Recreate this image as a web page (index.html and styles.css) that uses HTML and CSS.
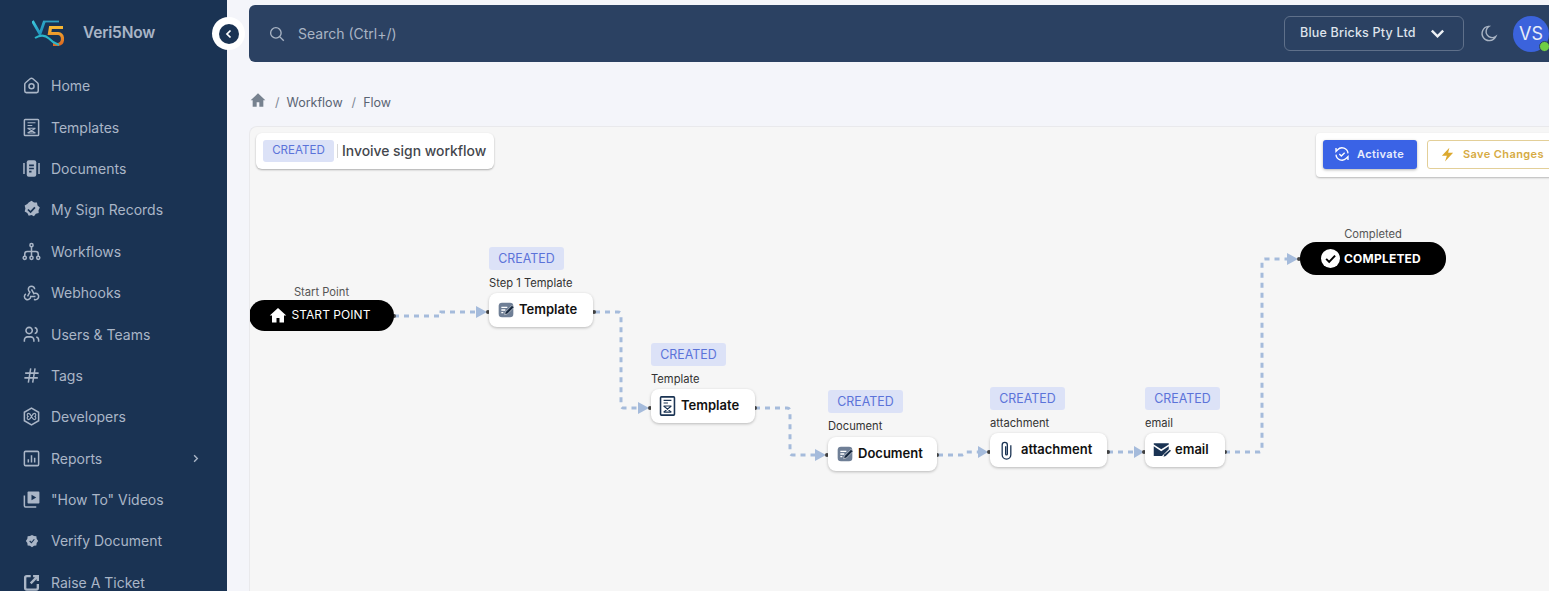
FILE: index.html
```html
<!DOCTYPE html>
<html lang="en">
<head>
<meta charset="utf-8">
<title>Veri5Now - Flow</title>
<link rel="stylesheet" href="styles.css">
</head>
<body>
<div class="app">
  <aside class="sidebar">
    <div class="brand">
      <svg class="logo" viewBox="0 0 32 26" fill="none">
        <defs>
          <linearGradient id="lg5" x1="0" y1="0" x2="0" y2="1"><stop offset="0" stop-color="#f7b733"/><stop offset="1" stop-color="#dd6a20"/></linearGradient>
          <linearGradient id="lgv" x1="0" y1="0" x2="1" y2="1"><stop offset="0" stop-color="#3cc9dc"/><stop offset="1" stop-color="#1c86b5"/></linearGradient>
        </defs>
        <path d="M0.500 1 L8 14 L12.500 1" stroke="url(#lgv)" stroke-width="2.800"/>
        <path d="M12 1.500 H27" stroke="#2f9fc0" stroke-width="1.800"/>
        <path d="M31 7.500 H18.500 L17.500 13.500 H26 Q30.500 14 30.500 19 Q30.500 24.500 25 24.500 H21" stroke="url(#lg5)" stroke-width="3.200"/>
        <path d="M3 18 Q11 13 17 18.500 Q21 23 27 25" stroke="#2bb5c9" stroke-width="2"/>
      </svg>
      <span class="brand-name">Veri5Now</span>
    </div>
    <nav class="nav">
      <a class="nav-item"><svg class="nav-icon" viewBox="0 0 24 24"><path d="M19.500 8.500l-5.800-5a2.700 2.700 0 0 0-3.400 0l-5.800 5A2.700 2.700 0 0 0 3.500 10.800V19a2 2 0 0 0 2 2h13a2 2 0 0 0 2-2v-8.200c0-.9-.4-1.700-1-2.300"/><circle cx="12" cy="13" r="3.200"/></svg><span>Home</span></a>
      <a class="nav-item"><svg class="nav-icon" viewBox="0 0 24 24"><rect x="3" y="2" width="18" height="20" rx="1"/><path class="thin" d="M7 6h10M7 9.500h6M7 13h10M7 19h10M7 13l10 6M17 13l-10 6"/></svg><span>Templates</span></a>
      <a class="nav-item"><svg class="nav-icon" viewBox="0 0 24 24"><rect class="solid" x="6" y="1.500" width="12" height="21" rx="2.500"/><path d="M2.500 5v14M21.500 5v14"/><path class="cut" d="M9 8h6M9 12h6M9 16h3"/></svg><span>Documents</span></a>
      <a class="nav-item"><svg class="nav-icon" viewBox="0 0 24 24"><path class="solid" d="M12 1l3.200 2 3.700.2.700 3.600 2.900 2.700-1.600 3.300.2 3.700-3.600 1-2.400 2.900-3.100-1.400-3.500.8-1.800-3.300-3.300-2 .9-3.700-.9-3.700 3.300-2L8.400 3.200z"/><path class="cut" d="M7.500 12l3.300 3.300 5.500-6"/></svg><span>My Sign Records</span></a>
      <a class="nav-item"><svg class="nav-icon" viewBox="0 0 24 24"><circle cx="12" cy="4" r="2"/><circle cx="3.500" cy="20" r="2"/><circle cx="12" cy="20" r="2"/><circle cx="20.500" cy="20" r="2"/><path d="M12 6v12M3.500 18v-3a3 3 0 0 1 3-3h11a3 3 0 0 1 3 3v3"/></svg><span>Workflows</span></a>
      <a class="nav-item"><svg class="nav-icon" viewBox="0 0 24 24"><path d="M4.900 13.600a4 4 0 1 0 6.100 3.400h6"/><path d="M15.100 20.500a4 4 0 1 0 1.900-7.500c-.7 0-1.400.2-2 .5l-3-5.500"/><path d="M16 8a4 4 0 1 0-8 0c0 1.500.8 2.800 2 3.500l-3 5.500"/></svg><span>Webhooks</span></a>
      <a class="nav-item"><svg class="nav-icon" viewBox="0 0 24 24"><circle cx="9" cy="7" r="4"/><path d="M3 21v-2a4 4 0 0 1 4-4h4a4 4 0 0 1 4 4v2M16 3.100a4 4 0 0 1 0 7.800M21 21v-2a4 4 0 0 0-3-3.900"/></svg><span>Users &amp; Teams</span></a>
      <a class="nav-item"><svg class="nav-icon" viewBox="0 0 24 24"><path d="M4 9h17M3 15h17M11 3L8 21M16.500 3l-3 18"/></svg><span>Tags</span></a>
      <a class="nav-item"><svg class="nav-icon" viewBox="0 0 24 24"><path d="M12 1.500l9 5.200v10.600l-9 5.200-9-5.200V6.700z"/><path class="thin" d="M8.500 8c3 0 4 8 7 8M15.500 8c-3 0-4 8-7 8M8.500 8a2 2 0 0 0 0 4M15.500 8a2 2 0 0 1 0 4M8.500 16a2 2 0 0 1 0-4M15.500 16a2 2 0 0 0 0-4"/></svg><span>Developers</span></a>
      <a class="nav-item"><svg class="nav-icon" viewBox="0 0 24 24"><rect x="3" y="3" width="18" height="18" rx="1.500"/><path d="M8 17v-4M12 17V8M16 17v-6"/></svg><span>Reports</span><svg class="nav-caret" viewBox="0 0 24 24"><path d="M9 5l7 7-7 7"/></svg></a>
      <a class="nav-item"><svg class="nav-icon" viewBox="0 0 24 24"><path class="solid" d="M8 2h13a1 1 0 0 1 1 1v13a1 1 0 0 1-1 1H8a1 1 0 0 1-1-1V3a1 1 0 0 1 1-1z"/><path class="notch" d="M12 6l6 3.500-6 3.500z"/><path d="M3 7v13a1.500 1.500 0 0 0 1.500 1.500H18"/></svg><span>"How To" Videos</span></a>
      <a class="nav-item"><svg class="nav-icon small" viewBox="0 0 24 24"><path class="solid" d="M12 1.500l3.500 2 4 .5.500 4 2.500 4-2.500 3.500-.5 4-4 .5-3.500 2.500-3.500-2.500-4-.5-.5-4L1.500 12 4 8l.5-4 4-.5z"/><path class="cut thin" d="M8 12l3 3 5-6"/></svg><span>Verify Document</span></a>
      <a class="nav-item"><svg class="nav-icon" viewBox="0 0 24 24"><path class="heavy" d="M11 4H6a2 2 0 0 0-2 2v13a2 2 0 0 0 2 2h12a2 2 0 0 0 2-2v-5"/><path class="heavy" d="M11 13l8-8M14 4h6v6"/></svg><span>Raise A Ticket</span></a>
    </nav>
  </aside>
  <button class="collapse"><span class="collapse-dot"><svg viewBox="0 0 24 24"><path d="M15 5l-7 7 7 7"/></svg></span></button>

  <main class="main">
    <header class="topbar">
      <svg class="search-icon" viewBox="0 0 24 24"><circle cx="10.500" cy="10.500" r="7"/><path d="M21 21l-5.500-5.500"/></svg>
      <span class="search-text">Search (Ctrl+/)</span>
      <div class="company"><span>Blue Bricks Pty Ltd</span><svg viewBox="0 0 24 24"><path d="M4 8l8 8 8-8"/></svg></div>
      <svg class="moon" viewBox="0 0 24 24"><path d="M12 3h.4A7.500 7.500 0 0 0 21 15.900 9 9 0 1 1 12 3z"/></svg>
      <div class="avatar">VS<span class="status"></span></div>
    </header>

    <div class="crumbs">
      <svg class="crumb-home" viewBox="0 0 24 24"><path d="M12 2L1 12.500h3V22h6v-6.500h4V22h6v-9.500h3z"/></svg>
      <span class="sep">/</span><span class="crumb">Workflow</span><span class="sep">/</span><span class="crumb">Flow</span>
    </div>

    <section class="canvas">
      <div class="title-card">
        <span class="badge">CREATED</span><span class="title-sep"></span><span class="title-text">Invoive sign workflow</span>
      </div>
      <div class="actions">
        <button class="btn-activate"><svg viewBox="0 0 24 24"><path d="M21 11A9 9 0 0 0 5.500 5.500L3 8V3M3 13a9 9 0 0 0 15.500 5.500L21 16v5"/><path d="M8 12l3 3 5-5"/></svg>Activate</button>
        <button class="btn-save"><svg viewBox="0 0 24 24"><path d="M15 1L3 14h8l-3 9 13-14h-8z"/></svg>Save Changes</button>
      </div>

      <svg class="edges" viewBox="249 126 1300 465" fill="none">
        <g class="edge">
          <path d="M394 316H441V312H480"/>
          <path d="M595 312H618Q621 312 621 315V405Q621 408 624 408H642"/>
          <path d="M755 408H787Q790 408 790 411V452Q790 455 793 455H818"/>
          <path d="M938 455H961Q964 455 964 453Q964 452 966 452H981"/>
          <path d="M1108 452H1136"/>
          <path d="M1225 452H1259Q1262 452 1262 449V262Q1262 259 1265 259H1290"/>
        </g>
        <g class="arrow">
          <path d="M476 306L487 312L476 318z"/>
          <path d="M638 402L649 408L638 414z"/>
          <path d="M815 449L826 455L815 461z"/>
          <path d="M978 446L988 452L978 458z"/>
          <path d="M1134 446L1144 452L1134 458z"/>
          <path d="M1287 253L1298 259L1287 265z"/>
        </g>
        <g class="dots">
          <circle cx="394" cy="316" r="2"/><circle cx="488" cy="312" r="2"/>
          <circle cx="594" cy="312" r="2"/><circle cx="650" cy="408" r="2"/>
          <circle cx="755" cy="408" r="2"/><circle cx="827" cy="455" r="2"/>
          <circle cx="937" cy="455" r="2"/><circle cx="989" cy="452" r="2"/>
          <circle cx="1108" cy="452" r="2"/><circle cx="1144" cy="452" r="2"/>
          <circle cx="1225" cy="452" r="2"/><circle cx="1299" cy="259" r="2"/>
        </g>
      </svg>

      <div class="node n-start">
        <span class="node-label center">Start Point</span>
        <div class="pill pill-begin"><svg class="pill-home" viewBox="0 0 24 24"><path d="M12 2.500L1 12.500h3V22h6v-6h4v6h6v-9.500h3z"/></svg>START POINT</div>
      </div>
      <div class="node n-step1">
        <span class="badge node-badge">CREATED</span>
        <span class="node-label">Step 1 Template</span>
        <div class="box w104"><svg class="doc-icon" viewBox="0 0 24 24"><rect class="doc-bg" x="1" y="1" width="22" height="22" rx="5"/><path class="doc-lines" d="M5 8h9M5 12h6M5 16h3"/><path class="doc-pen" d="M21 5l3 3-10 10-4 1 1-4z"/></svg>Template</div>
      </div>
      <div class="node n-template">
        <span class="badge node-badge">CREATED</span>
        <span class="node-label">Template</span>
        <div class="box w104"><svg class="tpl-icon" viewBox="3 0.500 18 23"><rect x="4" y="1.500" width="16" height="21" rx="1"/><path class="tpl-lines" d="M7.500 5.500h9M7.500 8.500h5M7.500 12h9M7.500 19h9M7.500 12l9 7M16.500 12l-9 7"/></svg>Template</div>
      </div>
      <div class="node n-document">
        <span class="badge node-badge">CREATED</span>
        <span class="node-label">Document</span>
        <div class="box w109"><svg class="doc-icon" viewBox="0 0 24 24"><rect class="doc-bg" x="1" y="1" width="22" height="22" rx="5"/><path class="doc-lines" d="M5 8h9M5 12h6M5 16h3"/><path class="doc-pen" d="M21 5l3 3-10 10-4 1 1-4z"/></svg>Document</div>
      </div>
      <div class="node n-attach">
        <span class="badge node-badge">CREATED</span>
        <span class="node-label">attachment</span>
        <div class="box w117"><svg class="clip-icon" viewBox="6 1 12 22"><path d="M17 6v11a5 5 0 0 1-10 0V5.500a3 3 0 0 1 6 0V16a1 1 0 0 1-2 0V7"/></svg>attachment</div>
      </div>
      <div class="node n-email">
        <span class="badge node-badge">CREATED</span>
        <span class="node-label">email</span>
        <div class="box w80"><svg class="mail-icon" viewBox="0 0 24 24"><path d="M1 3h20v1.500l-10 6.500L1 4.500z"/><path d="M1 7l10 6.500L21 7v4l-9 9H1z"/><path d="M22.500 11.500l1.500 1.500-7 7-3 1 1-3z"/></svg>email</div>
      </div>
      <div class="node n-complete">
        <span class="node-label center">Completed</span>
        <div class="pill pill-done"><svg class="pill-check" viewBox="0 0 24 24"><circle cx="12" cy="12" r="12"/><path d="M6.500 12.500l3.800 3.800 7.500-8"/></svg>COMPLETED</div>
      </div>
    </section>
  </main>
</div>
</body>
</html>
```

FILE: styles.css
```css
* { box-sizing: border-box; }
html, body { margin: 0; height: 100%; overflow: hidden; }
body { font-family: Inter, "Noto Sans", "Liberation Sans", sans-serif; background: #f4f5fa; }
.app { display: flex; width: 1549px; height: 591px; position: relative; overflow: hidden; }

/* Sidebar */
.sidebar { width: 227px; flex: none; background: #1a3353; overflow: hidden; }
.brand { display: flex; align-items: center; height: 65px; padding-left: 32px; gap: 19px; }
.logo { width: 32px; height: 26px; flex: none; }
.brand-name { color: #a9b5c6; font-size: 15.500px; font-weight: 600; letter-spacing: -0.2px; }
.nav { display: flex; flex-direction: column; }
.nav-item { display: flex; align-items: center; height: 41.4px; flex: none; padding-left: 22px; color: #aab6c7; font-size: 14px; }
.nav-icon { width: 19px; height: 19px; margin-right: 10px; flex: none; fill: none; stroke: #aab6c7; stroke-width: 1.900; }
.nav-icon.small { width: 14px; height: 14px; margin: 0 12px 0 3px; }
.nav-icon .solid { fill: #aab6c7; stroke: none; }
.nav-icon .cut { stroke: #1a3353; stroke-width: 2.200; }
.nav-icon .cut.thin { stroke: #1a3353; stroke-width: 2; }
.nav-icon .thin { stroke-width: 1.400; }
.nav-icon .notch { fill: #1a3353; stroke: none; }
.nav-icon .heavy { stroke-width: 3; }
.nav-caret { width: 11px; height: 11px; margin-left: auto; margin-right: 26px; fill: none; stroke: #aab6c7; stroke-width: 3; }

/* Collapse toggle, overlapping the sidebar edge */
.collapse { position: absolute; left: 212px; top: 17px; width: 33px; height: 33px; border: 0; padding: 0; border-radius: 50%; background: #fff; display: flex; align-items: center; justify-content: center; }
.collapse-dot { width: 20px; height: 20px; border-radius: 50%; background: #1a3353; display: flex; align-items: center; justify-content: center; }
.collapse-dot svg { width: 12px; height: 12px; fill: none; stroke: #fff; stroke-width: 3.500; }

/* Main */
.main { flex: 1; min-width: 0; display: flex; flex-direction: column; padding: 5px 0 0 22px; }
.topbar { height: 57px; flex: none; display: flex; align-items: center; background: #2b4162; border-radius: 6px 0 0 6px; padding-left: 19px; }
.search-icon { width: 18px; height: 18px; fill: none; stroke: #a9b4c4; stroke-width: 1.800; flex: none; }
.search-text { margin-left: 12px; color: #a9b4c4; font-size: 14px; }
.company { margin-left: auto; width: 180px; height: 35px; display: flex; align-items: center; justify-content: space-between; padding: 0 17px 0 15px; border: 1px solid #5f708a; border-radius: 6px; color: #dfe4ec; font-size: 12.500px; font-weight: 500; letter-spacing: 0.2px; }
.company span { margin-top: -2px; }
.company svg { width: 17px; height: 17px; fill: none; stroke: #eef1f5; stroke-width: 3.400; }
.moon { width: 19px; height: 19px; margin: 0 15px 0 15px; fill: none; stroke: #a9b4c4; stroke-width: 1.800; flex: none; }
.avatar { width: 36px; height: 36px; flex: none; position: relative; border-radius: 50%; background: #3b63dc; color: #e8edf8; font-size: 18px; display: flex; align-items: center; justify-content: center; }
.status { position: absolute; right: -1px; bottom: 0; width: 11px; height: 11px; border-radius: 50%; background: #6fcf45; border: 1.500px solid #2b4162; }

.crumbs { height: 64px; flex: none; display: flex; align-items: center; color: #5a6473; font-size: 12.500px; padding: 17px 0 0 1px; }
.crumb-home { width: 16px; height: 16px; fill: #77828f; margin: -5px 0 0 0; }
.sep { margin: 0 7px 0 9px; color: #7d8794; }
.canvas { flex: 1; position: relative; background: #f6f6f6; border: solid #e9e9ec; border-width: 1px 0 0 1px; border-radius: 8px 0 0 0; overflow: hidden; }

.badge { display: inline-flex; align-items: center; justify-content: center; background: #dce2f7; color: #5b73d9; border-radius: 3px; font-size: 12.400px; }
.title-card { position: absolute; left: 6px; top: 6px; width: 238px; height: 36px; display: flex; align-items: center; padding-left: 7px; background: #fff; border-radius: 6px; box-shadow: 0 1px 2px rgba(0,0,0,.3); }
.title-card .badge { width: 71px; height: 22px; font-size: 11.600px; padding-bottom: 2px; }
.title-sep { width: 1px; height: 14px; margin: 0 4px 0 3px; background: #d8d8d8; }
.title-text { color: #44474d; font-size: 13.900px; font-weight: 500; white-space: nowrap; padding-bottom: 1px; }

.actions { position: absolute; left: 1066px; top: 6px; width: 260px; height: 44px; display: flex; align-items: center; gap: 10px; padding: 0 0 2px 7px; background: #fff; border-radius: 4px; box-shadow: 0 1px 2px rgba(0,0,0,.25); }
.actions button { height: 29px; padding: 0; display: flex; align-items: center; border-radius: 3px; font-family: inherit; font-size: 11px; font-weight: 600; letter-spacing: 0.4px; white-space: nowrap; flex: none; }
.btn-activate { width: 94px; justify-content: center; gap: 7px; background: #3a63e6; color: #e9eefc; border: 0; box-shadow: 0 1px 3px rgba(0,0,0,.3); }
.btn-activate svg { width: 16px; height: 16px; fill: none; stroke: #fff; stroke-width: 2; margin-left: -2px; }
.btn-save { width: 130px; padding-left: 12px !important; gap: 8px; background: #fff; color: #d6ab43; border: 1px solid #e3cf98; }
.btn-save svg { width: 15px; height: 17px; fill: #dca92f; }

/* Flow diagram */
.edges { position: absolute; left: -1px; top: -1px; width: 1300px; height: 465px; }
.edge path { stroke: #a5bbdb; stroke-width: 3; stroke-dasharray: 5 5; }
.arrow path { fill: #a5bbdb; }
.dots circle { fill: #444; }

.node { position: absolute; display: flex; flex-direction: column; align-items: flex-start; }
.n-start { left: -1px; top: 159px; width: 145px; }
.n-complete { left: 1050px; top: 101px; width: 146px; }
.n-step1 { left: 239px; top: 120px; }
.n-template { left: 401px; top: 216px; }
.n-document { left: 578px; top: 263px; }
.n-attach { left: 740px; top: 260px; }
.n-email { left: 895px; top: 260px; }
.node-badge { width: 75px; height: 23px; }
.node-label { font-size: 11.200px; line-height: 13px; color: #333; margin: 7px 0 3px; white-space: nowrap; }
.n-document .node-label { margin-bottom: 4px; }
.node-label.center { align-self: center; color: #555; margin: 0 0 1px; }
.box { height: 34px; display: flex; align-items: center; background: #fff; border-radius: 8px; box-shadow: 0 1px 3px rgba(0,0,0,.25); color: #111; font-size: 13px; font-weight: 600; padding: 0 0 3px 9px; gap: 5px; }
.box svg { margin-top: 3px; }
.w104 { width: 104px; }
.w109 { width: 109px; }
.w117 { width: 117px; }
.w80 { width: 80px; }
.doc-icon { width: 16px; height: 16px; flex: none; }
.doc-bg { fill: #6f7f96; }
.doc-lines { fill: none; stroke: #fff; stroke-width: 2; }
.doc-pen { fill: #16283f; stroke: #fff; stroke-width: .8; }
.tpl-icon { width: 17px; height: 20px; flex: none; margin-left: -1px; fill: none; stroke: #1a3353; stroke-width: 1.800; }
.tpl-lines { stroke-width: 1.300; }
.clip-icon { width: 11px; height: 19px; flex: none; margin-left: 2px; margin-right: 4px; fill: none; stroke: #1a3353; stroke-width: 1.500; }
.mail-icon { width: 18px; height: 18px; flex: none; margin-left: -1px; margin-right: -1px; fill: #1a3353; }
.pill { height: 31px; width: 100%; display: flex; align-items: center; justify-content: center; gap: 5px; background: #000; color: #fff; border-radius: 16px; font-size: 12px; letter-spacing: 0.05px; }
.pill-begin { padding: 0 4px 3px 0; }
.pill-home { width: 18px; height: 18px; fill: #fff; margin-top: 2px; }
.pill-done { height: 33px; font-weight: 700; letter-spacing: 0.2px; gap: 4px; padding: 0 4px 1px 0; }
.pill-check { width: 19px; height: 19px; fill: none; margin-top: 1px; }
.pill-check circle { fill: #fff; }
.pill-check path { stroke: #000; stroke-width: 2.500; }
```
